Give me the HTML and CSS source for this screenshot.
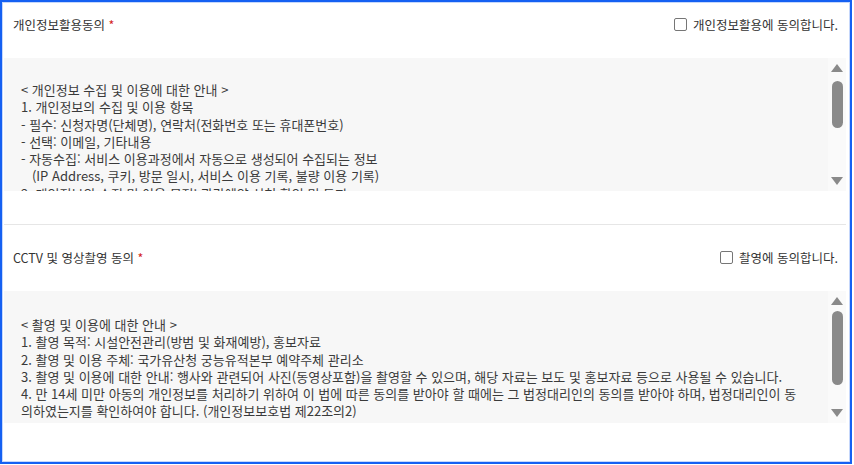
FILE: index.html
```html
<!DOCTYPE html>
<html lang="ko">
<head>
<meta charset="utf-8">
<title>동의</title>
<link rel="stylesheet" href="styles.css">
</head>
<body>
<div class="frame">
  <section class="section section--first">
    <div class="head">
      <span class="title">개인정보활용동의 <span class="req">*</span></span>
      <label class="agree"><span class="box"></span>개인정보활용에 동의합니다.</label>
    </div>
    <div class="terms">
      <div class="terms-text terms-text--a">&lt; 개인정보 수집 및 이용에 대한 안내 &gt;<br>1. 개인정보의 수집 및 이용 항목<br>- 필수: 신청자명(단체명), 연락처(전화번호 또는 휴대폰번호)<br>- 선택: 이메일, 기타내용<br>- 자동수집: 서비스 이용과정에서 자동으로 생성되어 수집되는 정보<br>&nbsp;&nbsp;&nbsp;(IP Address, 쿠키, 방문 일시, 서비스 이용 기록, 불량 이용 기록)<br>2. 개인정보의 수집 및 이용 목적: 관람예약 신청 확인 및 통지</div>
      <div class="bar">
        <span class="arrow arrow--up"></span>
        <span class="thumb thumb--a"></span>
        <span class="spacer"></span>
        <span class="arrow arrow--down"></span>
      </div>
    </div>
  </section>
  <section class="section">
    <div class="head">
      <span class="title">CCTV 및 영상촬영 동의 <span class="req">*</span></span>
      <label class="agree"><span class="box"></span>촬영에 동의합니다.</label>
    </div>
    <div class="terms terms--short">
      <div class="terms-text terms-text--b">&lt; 촬영 및 이용에 대한 안내 &gt;<br>1. 촬영 목적: 시설안전관리(방범 및 화재예방), 홍보자료<br>2. 촬영 및 이용 주체: 국가유산청 궁능유적본부 예약주체 관리소<br>3. 촬영 및 이용에 대한 안내: 행사와 관련되어 사진(동영상포함)을 촬영할 수 있으며, 해당 자료는 보도 및 홍보자료 등으로 사용될 수 있습니다.<br>4. 만 14세 미만 아동의 개인정보를 처리하기 위하여 이 법에 따른 동의를 받아야 할 때에는 그 법정대리인의 동의를 받아야 하며, 법정대리인이 동<br>의하였는지를 확인하여야 합니다. (개인정보보호법 제22조의2)</div>
      <div class="bar">
        <span class="arrow arrow--up"></span>
        <span class="thumb thumb--b"></span>
        <span class="spacer"></span>
        <span class="arrow arrow--down"></span>
      </div>
    </div>
  </section>
</div>
</body>
</html>
```

FILE: styles.css
```css
html, body {
  margin: 0;
  padding: 0;
  background: #ffffff;
}

body {
  font-family: "Noto Sans CJK KR", "Noto Sans", sans-serif;
  color: #333333;
}

.frame {
  box-sizing: border-box;
  width: 852px;
  height: 464px;
  border: 2px solid #1560f2;
  box-shadow: inset 0 0 0 1px #c5d7fb;
  overflow: hidden;
}

.section {
  margin: 0 4px 0 2px;
  padding: 21px 0 38px;
}

.section--first {
  padding: 11px 0 33px;
  border-bottom: 1px solid #e6e6e6;
}

.head {
  display: flex;
  align-items: center;
  justify-content: space-between;
  height: 22px;
  padding: 0 8px 0 9px;
  margin-bottom: 23px;
  font-size: 12.5px;
  color: #333333;
}

.title {
  white-space: nowrap;
}

.req {
  color: #d32222;
}

.agree {
  display: flex;
  align-items: center;
  gap: 6px;
  white-space: nowrap;
}

.box {
  box-sizing: border-box;
  width: 13px;
  height: 13px;
  border: 1px solid #767676;
  border-radius: 2px;
  background: #ffffff;
}

.terms {
  display: flex;
  height: 133px;
  background: #f7f7f7;
  overflow: hidden;
}

.terms--short {
  height: 132px;
}

.terms-text {
  flex: 1;
  min-width: 0;
  padding: 23px 0 0 17px;
  font-size: 13px;
  line-height: 17.3px;
  color: #3a3a3a;
  white-space: nowrap;
  overflow: hidden;
}

.terms-text--b {
  padding-top: 25px;
}

.bar {
  width: 18px;
  flex: none;
  display: flex;
  flex-direction: column;
  align-items: center;
  padding: 6px 0 6px;
  box-sizing: border-box;
  background: #fafafa;
}

.arrow {
  width: 0;
  height: 0;
  border-left: 6px solid transparent;
  border-right: 6px solid transparent;
  flex: none;
}

.arrow--up {
  border-bottom: 8px solid #8a8a8a;
}

.arrow--down {
  border-top: 8px solid #8a8a8a;
}

.thumb {
  flex: none;
  width: 11px;
  margin-top: 9px;
  border-radius: 6px;
  background: #8a8a8a;
}

.thumb--a {
  height: 47px;
}

.thumb--b {
  height: 74px;
  margin-top: 6px;
}

.spacer {
  flex: 1;
}
```
